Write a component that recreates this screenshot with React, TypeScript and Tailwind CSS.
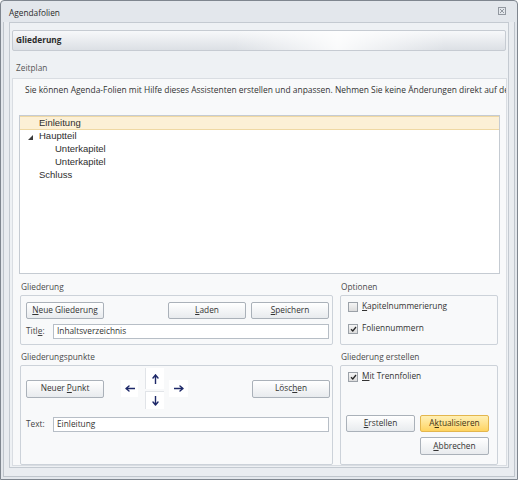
import React from "react";

function Btn({
  children,
  className = "",
  primary = false,
}: {
  children: React.ReactNode;
  className?: string;
  primary?: boolean;
}) {
  return (
    <div
      className={`flex shrink-0 items-center justify-center rounded-[2px] border ${
        primary
          ? "border-[#e3b64e] bg-linear-to-b from-[#fff0b4] to-[#ffd45f] text-[#3d3312]"
          : "border-[#aab1b9] bg-linear-to-b from-[#ffffff] to-[#e8ebee] text-[#333]"
      } ${className}`}
    >
      {children}
    </div>
  );
}

function Check({ checked = false }: { checked?: boolean }) {
  return (
    <span className="flex h-[10px] w-[10px] shrink-0 items-center justify-center border border-[#9ba1a8] bg-linear-to-b from-[#f5f5f5] to-[#dcdcdc]">
      {checked && (
        <svg width="7" height="6" viewBox="0 0 7 6">
          <path d="M1 3.2 L2.8 5 L6 1" stroke="#262626" strokeWidth="1.3" fill="none" />
        </svg>
      )}
    </span>
  );
}

function Field({ children }: { children: React.ReactNode }) {
  return (
    <div className="flex h-[15px] flex-1 items-center border border-[#b7bec6] bg-white pl-[3px] text-[#333]">
      {children}
    </div>
  );
}

function Arrow({ dir }: { dir: "left" | "right" | "up" | "down" }) {
  const paths: Record<string, string> = {
    left: "M1 4.5 H10 M1 4.5 L4 2 M1 4.5 L4 7",
    right: "M0 4.5 H9 M9 4.5 L6 2 M9 4.5 L6 7",
    up: "M4.5 1 V10 M4.5 1 L2 4 M4.5 1 L7 4",
    down: "M4.5 0 V9 M4.5 9 L2 6 M4.5 9 L7 6",
  };
  const horiz = dir === "left" || dir === "right";
  return (
    <svg width={horiz ? 10 : 9} height={horiz ? 9 : 10} viewBox={horiz ? "0 0 10 9" : "0 0 9 10"}>
      <path d={paths[dir]} stroke="#1d2868" strokeWidth="1.4" fill="none" strokeLinecap="round" />
    </svg>
  );
}

export default function App() {
  return (
    <div className="h-[480px] w-[518px] bg-white font-['Open_Sans',sans-serif] text-[8.3px] text-[#333]">
      <div className="flex h-full w-full flex-col rounded-t-[4px] border border-[#7f868f] bg-[#e3e7ec]">
        {/* Title bar */}
        <div className="flex h-[21px] shrink-0 items-center justify-between pl-[8px] pr-[11px] pt-[4px]">
          <span className="text-[#2a2a2a]">Agendafolien</span>
          <svg width="8" height="8" viewBox="0 0 8 8" className="-mt-[5px]">
            <rect x="0.5" y="0.5" width="7" height="7" stroke="#9298a0" fill="none" />
            <path d="M2 2 L6 6 M6 2 L2 6" stroke="#9298a0" strokeWidth="1" />
          </svg>
        </div>

        {/* Frame */}
        <div className="flex flex-1 flex-col px-[2px] pb-[2px]">
          <div className="flex flex-1 flex-col border-x border-b border-[#bfc5cc] bg-[#e9ecf0] px-[5px] pb-[8px]">
            {/* Inner panel */}
            <div className="flex flex-1 flex-col border border-[#c4cad1] bg-[#eef1f4] pb-[1px] pt-[7px]">
              {/* Section header */}
              <div className="mx-[2px] flex h-[21px] items-center rounded-[2px] border border-[#c6cbd2] bg-[linear-gradient(to_right,rgba(255,255,255,0)_45%,rgba(255,255,255,0.85)_66%,rgba(255,255,255,0)_88%),linear-gradient(to_bottom,#f7f8fa,#dce0e5)] pl-[3px] font-bold text-[#2b2b2b]">
                Gliederung
              </div>

              <div className="mt-[10px] h-[13px] pl-[6px] leading-[13px] text-[#555]">Zeitplan</div>

              {/* White panel */}
              <div className="ml-[2px] mr-[1px] mt-[4px] flex flex-1 flex-col overflow-hidden border border-[#d9dde2] bg-[#f8f9fa] px-[6px] pt-[5px]">
                <div className="h-[12px] whitespace-nowrap pl-[6px] text-[8.45px] leading-[12px] text-[#333]">
                  Sie können Agenda-Folien mit Hilfe dieses Assistenten erstellen und anpassen. Nehmen Sie keine Änderungen direkt auf den Folien vor.
                </div>

                {/* Tree list */}
                <div className="mt-[19px] h-[159px] shrink-0 border border-[#c5cbd2] bg-white font-['Liberation_Sans',Arial,sans-serif] text-[9.5px] text-[#2e2e2e]">
                  <div className="flex h-[14px] items-center border-y border-[#efd8a3] bg-[#fcf0d6] pl-[19px]">
                    Einleitung
                  </div>
                  <div className="flex h-[13px] items-center pl-[8px]">
                    <svg width="5" height="5" viewBox="0 0 5 5" className="mr-[6px] mt-[1px]">
                      <polygon points="5,0 5,5 0,5" fill="#3c3c3c" />
                    </svg>
                    Hauptteil
                  </div>
                  <div className="flex h-[13px] items-center pl-[35px]">Unterkapitel</div>
                  <div className="flex h-[13px] items-center pl-[35px]">Unterkapitel</div>
                  <div className="flex h-[13px] items-center pl-[19px]">Schluss</div>
                </div>

                {/* Row 1: Gliederung + Optionen */}
                <div className="ml-[1px] mt-[7px] flex gap-[7px]">
                  <div className="flex w-[313px] flex-col">
                    <div className="mb-[2px] h-[12px] pl-[1px] leading-[12px] text-[#4a4a4a]">Gliederung</div>
                    <div className="flex h-[50px] flex-col rounded-[2px] border border-[#ccd2d9] pl-[5px] pr-[3px] pt-[6px]">
                      <div className="flex">
                        <Btn className="h-[17px] w-[78px]">
                          <span>
                            <u>N</u>eue Gliederung
                          </span>
                        </Btn>
                        <Btn className="ml-auto h-[17px] w-[78px]">
                          <span>
                            <u>L</u>aden
                          </span>
                        </Btn>
                        <Btn className="ml-[5px] h-[17px] w-[78px]">
                          <span>
                            <u>S</u>peichern
                          </span>
                        </Btn>
                      </div>
                      <div className="mt-[5px] flex items-center">
                        <span className="w-[27px] shrink-0 text-[#444]">
                          Titl<u>e</u>:
                        </span>
                        <Field>Inhaltsverzeichnis</Field>
                      </div>
                    </div>
                  </div>
                  <div className="flex w-[158px] flex-col">
                    <div className="mb-[2px] h-[12px] pl-[1px] leading-[12px] text-[#4a4a4a]">Optionen</div>
                    <div className="flex h-[50px] flex-col rounded-[2px] border border-[#ccd2d9] pl-[7px] pt-[5px]">
                      <div className="flex h-[11px] items-center gap-[4px]">
                        <Check />
                        <span>
                          <u>K</u>apitelnummerierung
                        </span>
                      </div>
                      <div className="mt-[11px] flex h-[11px] items-center gap-[4px]">
                        <Check checked />
                        <span>Foliennummern</span>
                      </div>
                    </div>
                  </div>
                </div>

                {/* Row 2: Gliederungspunkte + Gliederung erstellen */}
                <div className="ml-[1px] mt-[6px] flex gap-[7px]">
                  <div className="flex w-[313px] flex-col">
                    <div className="mb-[2px] h-[12px] pl-[1px] leading-[12px] text-[#4a4a4a]">Gliederungspunkte</div>
                    <div className="flex h-[100px] flex-col rounded-[2px] border border-[#ccd2d9] pl-[5px] pr-[2px] pt-[2px]">
                      <div className="flex items-center">
                        <Btn className="h-[18px] w-[78px]">
                          <span>
                            Neuer <u>P</u>unkt
                          </span>
                        </Btn>
                        <div className="ml-[17px] flex items-center">
                          <div className="flex h-[17px] w-[17px] items-center justify-center bg-white">
                            <Arrow dir="left" />
                          </div>
                          <div className="ml-[7px] flex flex-col">
                            <div className="flex h-[21px] w-[19px] items-center justify-center border-l border-[#e1e4e8] bg-white">
                              <Arrow dir="up" />
                            </div>
                            <div className="mt-[2px] flex h-[18px] w-[19px] items-center justify-center border-l border-t border-[#e1e4e8] bg-white">
                              <Arrow dir="down" />
                            </div>
                          </div>
                          <div className="ml-[5px] flex h-[17px] w-[19px] items-center justify-center bg-white">
                            <Arrow dir="right" />
                          </div>
                        </div>
                        <Btn className="ml-auto h-[18px] w-[78px]">
                          <span>
                            Lösc<u>h</u>en
                          </span>
                        </Btn>
                      </div>
                      <div className="mr-[1px] mt-[8px] flex items-center">
                        <span className="w-[27px] shrink-0 text-[#444]">Text:</span>
                        <Field>Einleitung</Field>
                      </div>
                    </div>
                  </div>
                  <div className="flex w-[158px] flex-col">
                    <div className="mb-[2px] h-[12px] pl-[1px] leading-[12px] text-[#4a4a4a]">Gliederung erstellen</div>
                    <div className="flex h-[100px] flex-col rounded-[2px] border border-[#ccd2d9] pl-[5px] pt-[5px]">
                      <div className="flex h-[11px] items-center gap-[4px] pl-[2px]">
                        <Check checked />
                        <span>
                          <u>M</u>it Trennfolien
                        </span>
                      </div>
                      <div className="mt-[33px] flex gap-[5px]">
                        <Btn className="h-[17px] w-[69px]">
                          <span>
                            <u>E</u>rstellen
                          </span>
                        </Btn>
                        <Btn primary className="h-[17px] w-[69px]">
                          <span>
                            A<u>k</u>tualisieren
                          </span>
                        </Btn>
                      </div>
                      <div className="mt-[5px] flex pl-[74px]">
                        <Btn className="h-[18px] w-[69px]">
                          <span>
                            <u>A</u>bbrechen
                          </span>
                        </Btn>
                      </div>
                    </div>
                  </div>
                </div>
              </div>
            </div>
          </div>
        </div>
      </div>
    </div>
  );
}
